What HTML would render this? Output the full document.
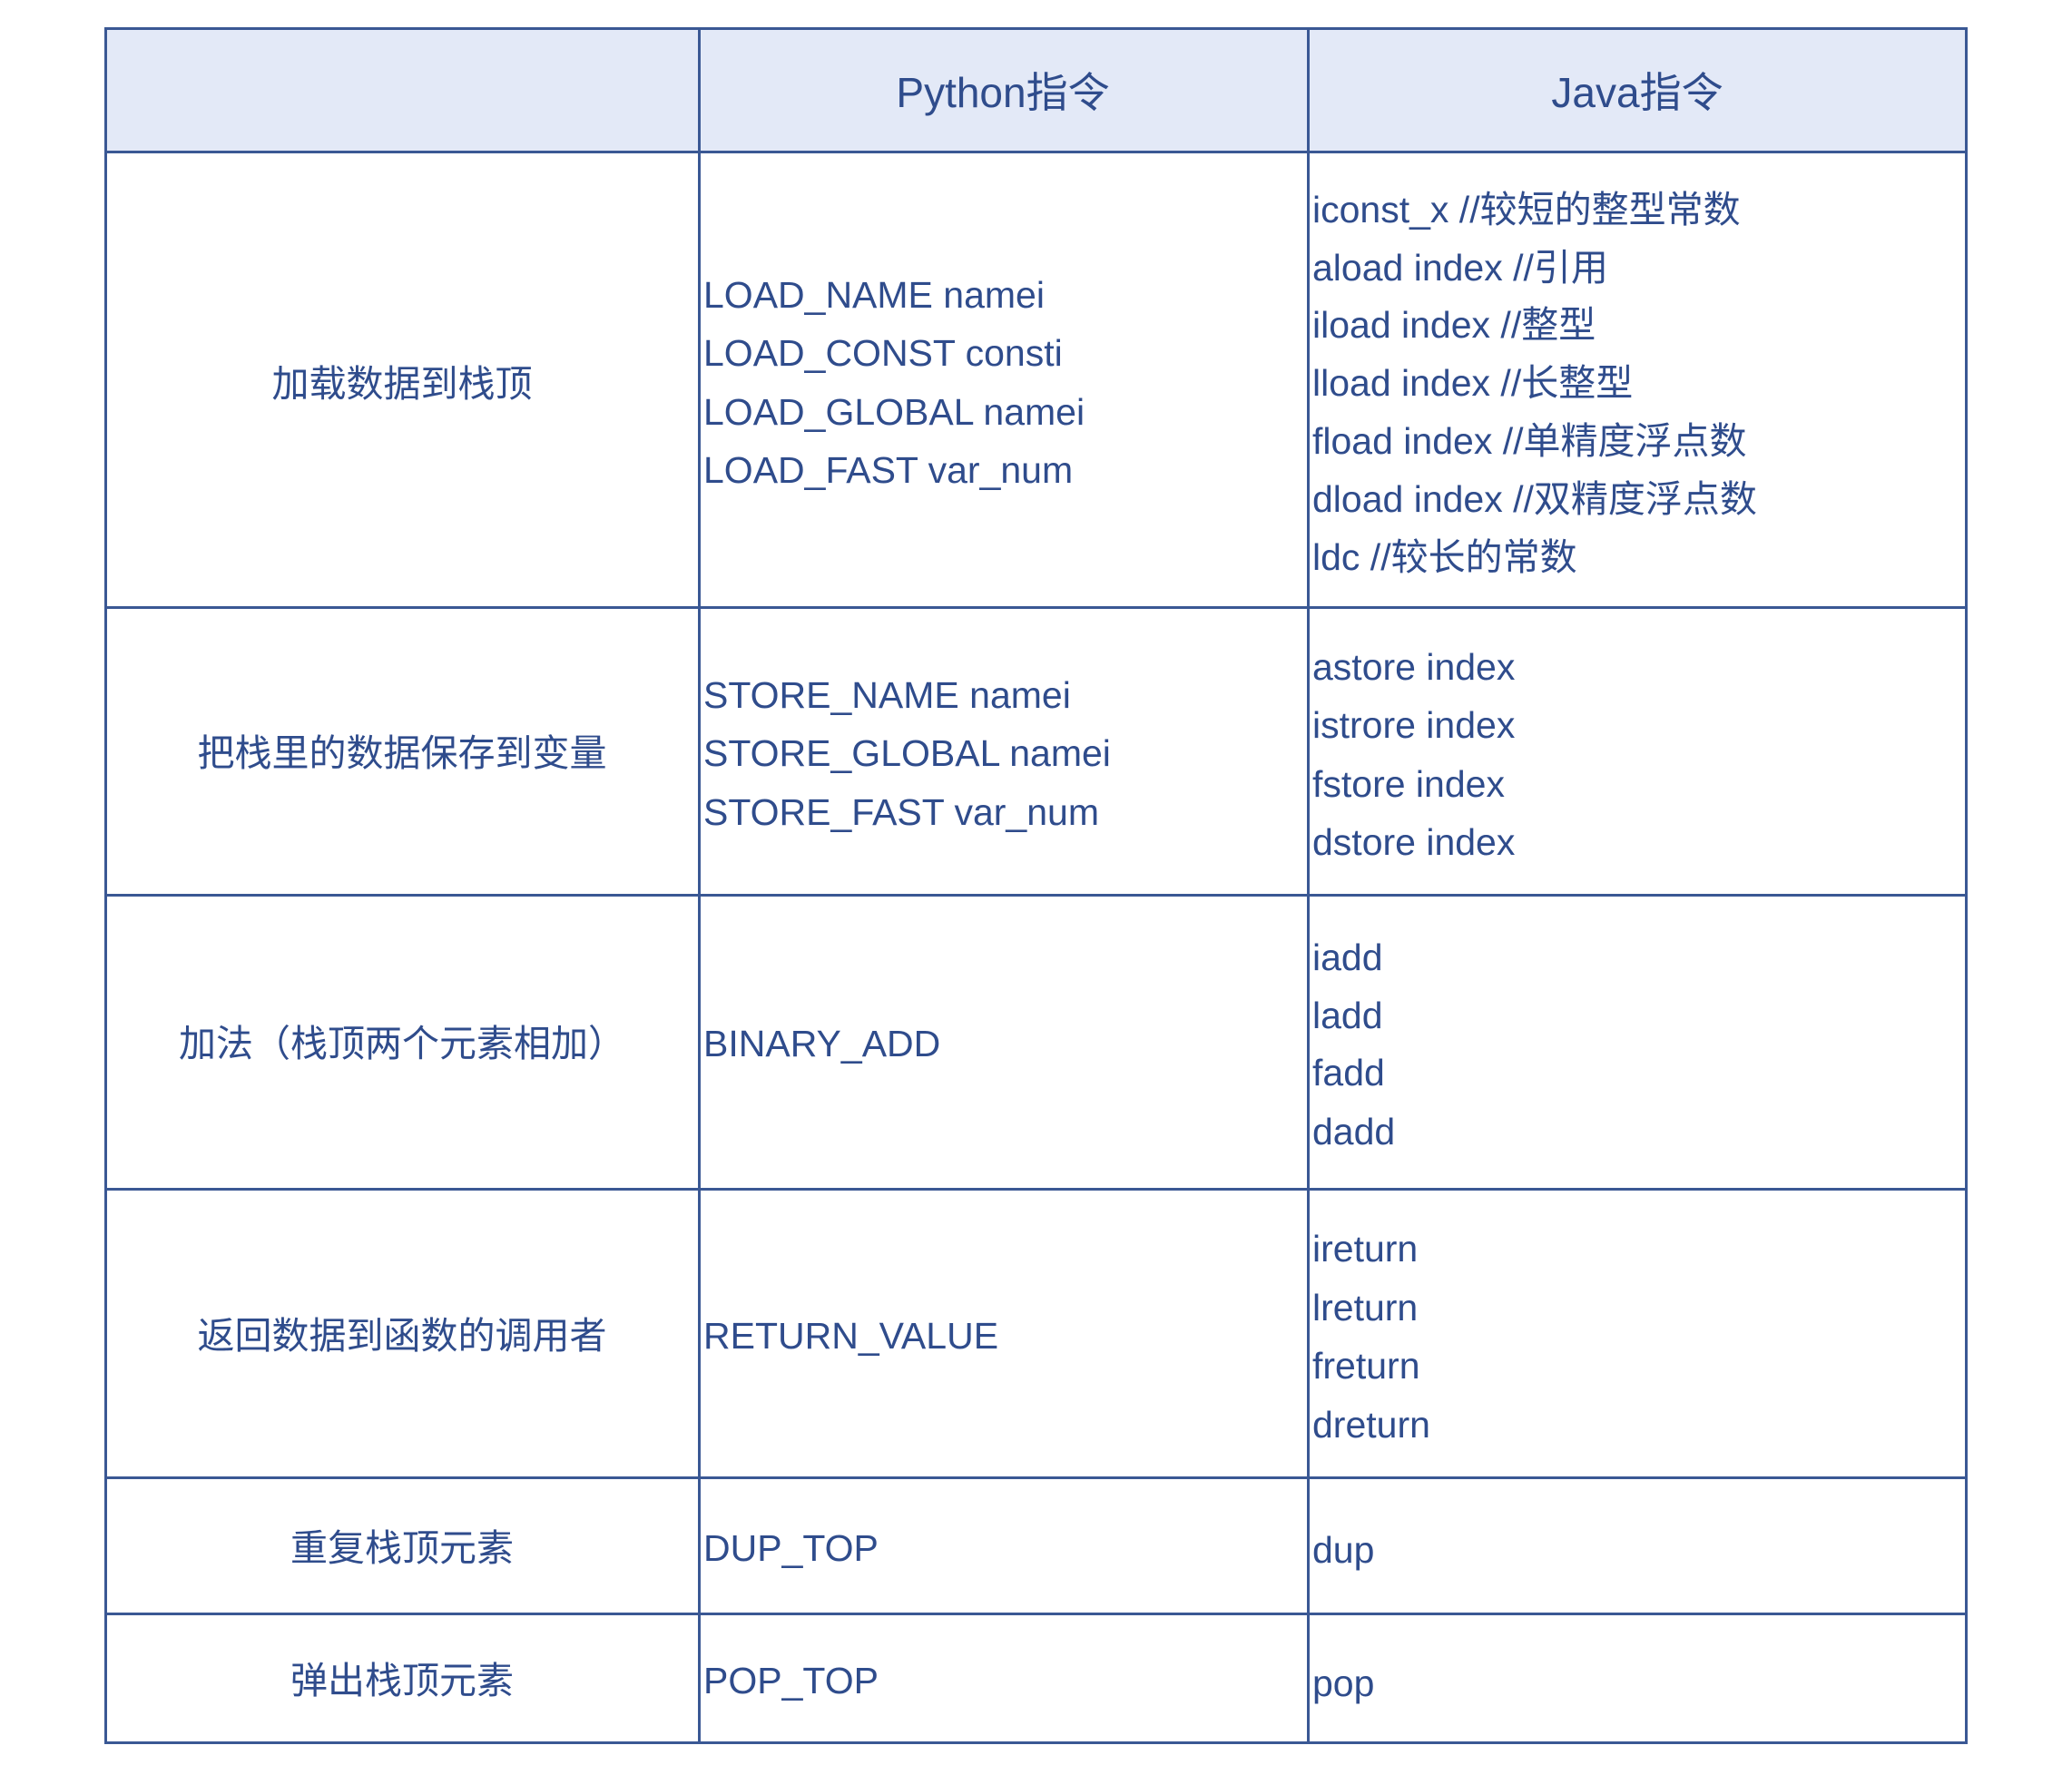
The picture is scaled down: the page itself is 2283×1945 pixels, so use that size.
<!DOCTYPE html>
<html><head><meta charset="utf-8"><style>
body{margin:0;width:2283px;height:1945px;background:#fff;position:relative;overflow:hidden;font-family:"Liberation Sans","Noto Sans CJK SC",sans-serif;color:#2f4c8c;}
.h{position:absolute;background:#3a5894;}
.t{position:absolute;font-size:41px;line-height:64px;height:64px;white-space:nowrap;}
.c{width:654px;left:116px;text-align:center;}
</style></head><body>
<div style="position:absolute;left:116px;top:31px;width:2050px;height:136px;background:#e3e9f7"></div>
<div class="h" style="left:116px;top:30px;width:2052px;height:3px"></div>
<div class="h" style="left:116px;top:166px;width:2052px;height:3px"></div>
<div class="h" style="left:116px;top:668px;width:2052px;height:3px"></div>
<div class="h" style="left:116px;top:985px;width:2052px;height:3px"></div>
<div class="h" style="left:116px;top:1309px;width:2052px;height:3px"></div>
<div class="h" style="left:116px;top:1627px;width:2052px;height:3px"></div>
<div class="h" style="left:116px;top:1777px;width:2052px;height:3px"></div>
<div class="h" style="left:116px;top:1919px;width:2052px;height:3px"></div>
<div class="h" style="left:115px;top:30px;width:3px;height:1892px"></div>
<div class="h" style="left:769px;top:30px;width:3px;height:1892px"></div>
<div class="h" style="left:1440px;top:30px;width:3px;height:1892px"></div>
<div class="h" style="left:2165px;top:30px;width:3px;height:1892px"></div>

<div class="t" style="left:770px;width:670px;text-align:center;top:70px;font-size:46px">Python指令</div>
<div class="t" style="left:1442px;width:724px;text-align:center;top:70px;font-size:46px">Java指令</div>

<div class="t c" style="top:391px">加载数据到栈顶</div>
<div class="t" style="left:775px;top:293px">LOAD_NAME namei</div>
<div class="t" style="left:775px;top:357px">LOAD_CONST consti</div>
<div class="t" style="left:775px;top:422px">LOAD_GLOBAL namei</div>
<div class="t" style="left:775px;top:486px">LOAD_FAST var_num</div>
<div class="t" style="left:1446px;top:199px">iconst_x //较短的整型常数</div>
<div class="t" style="left:1446px;top:263px">aload index //引用</div>
<div class="t" style="left:1446px;top:326px">iload index //整型</div>
<div class="t" style="left:1446px;top:390px">lload index //长整型</div>
<div class="t" style="left:1446px;top:454px">fload index //单精度浮点数</div>
<div class="t" style="left:1446px;top:518px">dload index //双精度浮点数</div>
<div class="t" style="left:1446px;top:582px">ldc //较长的常数</div>

<div class="t c" style="top:798px">把栈里的数据保存到变量</div>
<div class="t" style="left:775px;top:734px">STORE_NAME namei</div>
<div class="t" style="left:775px;top:798px">STORE_GLOBAL namei</div>
<div class="t" style="left:775px;top:863px">STORE_FAST var_num</div>
<div class="t" style="left:1446px;top:703px">astore index</div>
<div class="t" style="left:1446px;top:767px">istrore index</div>
<div class="t" style="left:1446px;top:832px">fstore index</div>
<div class="t" style="left:1446px;top:896px">dstore index</div>

<div class="t c" style="top:1118px">加法（栈顶两个元素相加）</div>
<div class="t" style="left:775px;top:1118px">BINARY_ADD</div>
<div class="t" style="left:1446px;top:1023px">iadd</div>
<div class="t" style="left:1446px;top:1087px">ladd</div>
<div class="t" style="left:1446px;top:1150px">fadd</div>
<div class="t" style="left:1446px;top:1215px">dadd</div>

<div class="t c" style="top:1440px">返回数据到函数的调用者</div>
<div class="t" style="left:775px;top:1440px">RETURN_VALUE</div>
<div class="t" style="left:1446px;top:1344px">ireturn</div>
<div class="t" style="left:1446px;top:1409px">lreturn</div>
<div class="t" style="left:1446px;top:1473px">freturn</div>
<div class="t" style="left:1446px;top:1538px">dreturn</div>

<div class="t c" style="top:1674px">重复栈顶元素</div>
<div class="t" style="left:775px;top:1674px">DUP_TOP</div>
<div class="t" style="left:1446px;top:1676px">dup</div>

<div class="t c" style="top:1820px">弹出栈顶元素</div>
<div class="t" style="left:775px;top:1820px">POP_TOP</div>
<div class="t" style="left:1446px;top:1823px">pop</div>
</body></html>
